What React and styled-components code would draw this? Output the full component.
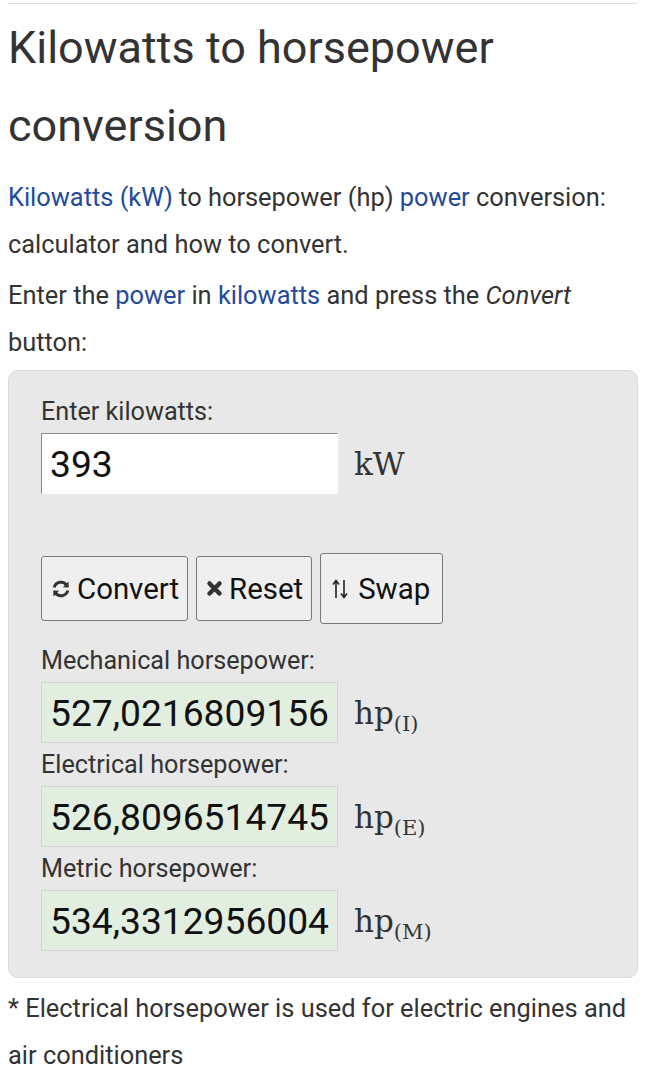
import React from "react";
import styled, { createGlobalStyle } from "styled-components";

const Global = createGlobalStyle`
  body {
    margin: 0;
    background: #fff;
    font-family: Roboto, "Liberation Sans", sans-serif;
    color: #333;
  }
`;

const Page = styled.div`
  padding: 0 8px;
`;

const TopRule = styled.div`
  margin-top: 3px;
  border-top: 1px solid #dedede;
`;

const Title = styled.h1`
  margin: 5px 0 9px;
  font-size: 45px;
  font-weight: 400;
  line-height: 78px;
  color: #333;
`;

const Para = styled.p`
  margin: 0 0 4px;
  font-size: 25.4px;
  line-height: 47px;
`;

const A = styled.a`
  color: #234a9b;
  text-decoration: none;
`;

const Calc = styled.div`
  margin-top: 4px;
  background: #e8e8e8;
  border: 1px solid #dadada;
  border-radius: 10px;
  padding: 26px 32px 26px;
`;

const Label = styled.div`
  font-size: 25.2px;
  line-height: 30px;
  margin-top: ${p => p.$top || 0}px;
  margin-bottom: 6px;
`;

const Row = styled.div`
  display: flex;
  align-items: center;
  gap: 16px;
`;

const Field = styled.div`
  box-sizing: border-box;
  width: 297px;
  height: 61px;
  display: flex;
  align-items: center;
  padding-left: 8px;
  font-size: 37.2px;
  color: #111;
  background: ${p => (p.$out ? "#e2eee0" : "#fff")};
  border: 1px solid ${p => (p.$out ? "#cfd6cd" : "#fff")};
  ${p => !p.$out && "border-left-color: #8a8a8a; border-top-color: #8a8a8a;"}
`;

const Unit = styled.span`
  font-family: "DejaVu Serif", "Liberation Serif", serif;
  font-size: 31px;
  color: #333;
  sub {
    font-size: 21px;
    vertical-align: -7px;
    line-height: 0;
  }
`;

const Buttons = styled.div`
  display: flex;
  align-items: center;
  gap: 8px;
  margin-top: 59px;
`;

const Btn = styled.button`
  box-sizing: border-box;
  display: flex;
  align-items: center;
  gap: ${p => (p.$big ? 10 : 6)}px;
  height: ${p => (p.$big ? 71 : 65)}px;
  padding: 0 ${p => (p.$big ? 12 : 8)}px 0 ${p => (p.$big ? 11 : 9)}px;
  background: #efefef;
  border: 1px solid #7a7a7a;
  border-radius: 3px;
  font-family: Roboto, "Liberation Sans", sans-serif;
  font-size: 29.4px;
  color: #111;
`;

const RefreshIcon = () => (
  <svg width="20" height="20" viewBox="0 0 20 20">
    <path d="M3.2 8.5 A7 7 0 0 1 15.8 6.3" fill="none" stroke="#333" strokeWidth="3" />
    <path d="M17.5 2.5 L17.8 8.6 L11.8 8.2 Z" fill="#333" />
    <path d="M16.8 11.5 A7 7 0 0 1 4.2 13.7" fill="none" stroke="#333" strokeWidth="3" />
    <path d="M2.5 17.5 L2.2 11.4 L8.2 11.8 Z" fill="#333" />
  </svg>
);

const CrossIcon = () => (
  <svg width="17" height="17" viewBox="0 0 17 17">
    <path d="M3.5 3.5 L13.5 13.5 M13.5 3.5 L3.5 13.5" stroke="#333" strokeWidth="4.5" strokeLinecap="round" />
  </svg>
);

const SwapIcon = () => (
  <svg width="16" height="22" viewBox="0 0 16 22">
    <path d="M4 20 V3 M1 6.5 L4 2.5 L7 6.5" fill="none" stroke="#222" strokeWidth="1.6" />
    <path d="M12 2 V19 M9 15.5 L12 19.5 L15 15.5" fill="none" stroke="#222" strokeWidth="1.6" />
  </svg>
);

const Note = styled.p`
  margin: 7px 0 0;
  font-size: 25.4px;
  line-height: 47px;
`;

const results = [
  { label: "Mechanical horsepower:", value: "527,0216809156", sub: "(I)" },
  { label: "Electrical horsepower:", value: "526,8096514745", sub: "(E)" },
  { label: "Metric horsepower:", value: "534,3312956004", sub: "(M)" },
];

export default function App() {
  return (
    <Page>
      <Global />
      <TopRule />
      <Title>Kilowatts to horsepower conversion</Title>
      <Para>
        <A href="#">Kilowatts (kW)</A> to horsepower (hp) <A href="#">power</A> conversion:
        calculator and how to convert.
      </Para>
      <Para>
        Enter the <A href="#">power</A> in <A href="#">kilowatts</A> and press the <i>Convert</i> button:
      </Para>
      <Calc>
        <Label>Enter kilowatts:</Label>
        <Row>
          <Field>393</Field>
          <Unit>kW</Unit>
        </Row>
        <Buttons>
          <Btn><RefreshIcon />Convert</Btn>
          <Btn><CrossIcon />Reset</Btn>
          <Btn $big><SwapIcon />Swap</Btn>
        </Buttons>
        {results.map((r, i) => (
          <div key={r.label}>
            <Label $top={i === 0 ? 22 : 7}>{r.label}</Label>
            <Row>
              <Field $out>{r.value}</Field>
              <Unit>hp<sub>{r.sub}</sub></Unit>
            </Row>
          </div>
        ))}
      </Calc>
      <Note>* Electrical horsepower is used for electric engines and air conditioners</Note>
    </Page>
  );
}
